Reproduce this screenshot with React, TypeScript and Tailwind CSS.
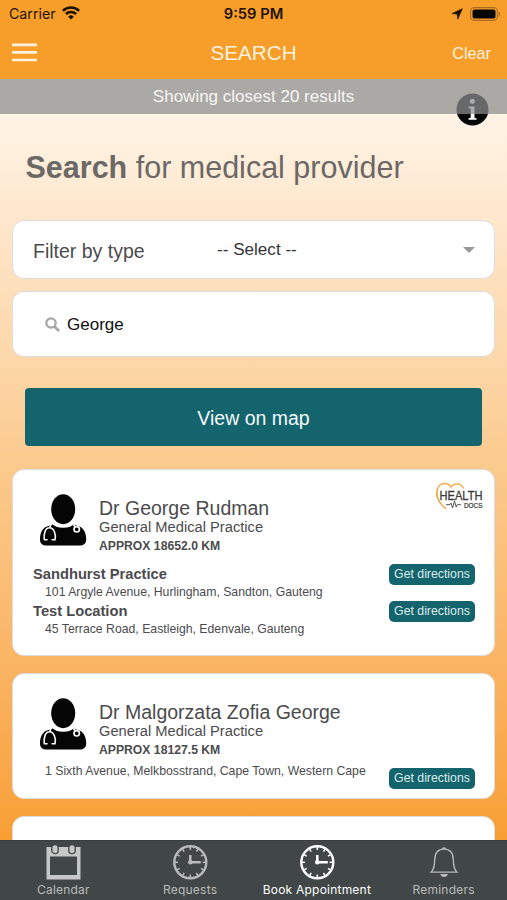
import type { ReactNode } from 'react';

type Location = { name?: string; address: string };

type Provider = {
  name: string;
  practice: string;
  distance: string;
  locations: Location[];
  healthDocs?: boolean;
};

const providers: Provider[] = [
  {
    name: 'Dr George Rudman',
    practice: 'General Medical Practice',
    distance: 'APPROX 18652.0 KM',
    healthDocs: true,
    locations: [
      { name: 'Sandhurst Practice', address: '101 Argyle Avenue, Hurlingham, Sandton, Gauteng' },
      { name: 'Test Location', address: '45 Terrace Road, Eastleigh, Edenvale, Gauteng' },
    ],
  },
  {
    name: 'Dr Malgorzata Zofia George',
    practice: 'General Medical Practice',
    distance: 'APPROX 18127.5 KM',
    locations: [{ address: '1 Sixth Avenue, Melkbosstrand, Cape Town, Western Cape' }],
  },
];

function WifiIcon() {
  return (
    <svg width="18" height="14" viewBox="0 0 18 14" fill="none" stroke="#1c1206" strokeWidth="2.5">
      <path d="M.9 4.9a11.6 11.6 0 0 1 16.2 0" />
      <path d="M3.9 8a7.3 7.3 0 0 1 10.2 0" />
      <path d="M9 13.6 6.2 10.7a4 4 0 0 1 5.6 0Z" fill="#1c1206" stroke="none" />
    </svg>
  );
}

function DoctorIcon() {
  return (
    <svg width="48" height="54" viewBox="0 0 48 54">
      <path
        d="M13 31.500h22c2 1.300 4 1.500 6 2.300 4 1.800 6.200 6.700 6.200 12.700 0 4-2.700 6-6.700 6H7.500c-4 0-6.500-2-6.500-6 0-6 2.200-10.900 6.200-12.700 2-.8 4-1 5.800-2.300Z"
        fill="#050505"
      />
      {/* collar */}
      <path d="M13.500 30c4 5.200 17.400 5.200 21.400 0Z" fill="#fff" stroke="#fff" strokeWidth="1.500" />
      <ellipse cx="24.200" cy="16.200" rx="12" ry="15" fill="#050505" />
      <path
        d="M12.200 31 10.800 34.500M8 46.700H5.300C4.600 41 6 34.800 10.600 34.800S17.200 42 16 46.700H13.200"
        fill="none"
        stroke="#fff"
        strokeWidth="1.600"
        strokeLinecap="round"
        strokeLinejoin="round"
      />
      <path d="m34.500 31.500 2 3" stroke="#fff" strokeWidth="1.600" />
      <circle cx="37.700" cy="36.300" r="2.700" fill="#050505" stroke="#fff" strokeWidth="1.700" />
    </svg>
  );
}

function HealthDocsLogo() {
  return (
    <svg width="52" height="30" viewBox="0 0 52 30" fill="none">
      <path d="M30.500 6.500C28.500.8 20.500.8 18 5.200 15.500.2 7.500.2 5 5.800 2 13 5.500 21 13 26.800" stroke="#f3ab50" strokeWidth="1.400" />
      <path d="M4.500 6.500C1.800 14 6 22 13.500 27" stroke="#f3a33c" strokeWidth="1" />
      <path d="M13 22.700h4l1-1.700 1.500 5 2-7 1.700 6 1-2.300H28" stroke="#444" strokeWidth=".9" />
      <text x="6.500" y="17.900" fill="#3a3a3a" stroke="#3a3a3a" strokeWidth=".3" fontSize="12" textLength="43" lengthAdjust="spacingAndGlyphs">
        HEALTH
      </text>
      <text x="31" y="25.500" fill="#333" stroke="#333" strokeWidth=".2" fontSize="6.800" textLength="18.500" lengthAdjust="spacingAndGlyphs">
        DOCS
      </text>
    </svg>
  );
}

function CalendarIcon() {
  return (
    <svg width="36" height="36" viewBox="0 0 36 36">
      <path d="M1.500 3h34v32.500h-34Z" fill="#c6c7c7" />
      <path d="M5 12.500h27v18.500H5Z" fill="#414747" />
      <rect x="6.800" y=".6" width="6.400" height="9" rx="3.200" fill="#c6c7c7" stroke="#414747" strokeWidth="1.300" />
      <rect x="23.800" y=".6" width="6.400" height="9" rx="3.200" fill="#c6c7c7" stroke="#414747" strokeWidth="1.300" />
    </svg>
  );
}

function ClockIcon() {
  const ticks = [0, 30, 60, 90, 120, 150, 180, 210, 240, 270, 300, 330];
  return (
    <svg width="36" height="36" viewBox="0 0 36 36" fill="none" stroke="currentColor">
      <circle cx="18.300" cy="18.300" r="16" strokeWidth="2.400" />
      {ticks.map((deg) => (
        <path key={deg} d="M18.300 3v3" strokeWidth="1.500" transform={`rotate(${deg} 18.3 18.3)`} />
      ))}
      <path d="M18.300 11v7.300h10.500" strokeWidth="2.500" />
      <circle cx="18.300" cy="18.300" r="2.300" fill="currentColor" stroke="none" />
    </svg>
  );
}

function BellIcon() {
  return (
    <svg width="36" height="36" viewBox="0 0 36 36" fill="none" stroke="#b9bbbb" strokeWidth="1.300">
      <path d="M16.200 5.300a2 2 0 0 1 3.800 0M5 28.200c3.200-3 3.500-6.500 3.700-12.500C8.900 9 12.300 5.200 18 5.200s9.100 3.800 9.300 10.500c.2 6 .5 9.500 3.700 12.500Z" />
      <path d="M14.300 30h7.500c-.3 2-1.600 3-3.700 3s-3.400-1-3.800-3Z" fill="#b9bbbb" stroke="none" />
    </svg>
  );
}

function Card({ className, children }: { className: string; children?: ReactNode }) {
  return (
    <div className={`mx-3 shrink-0 rounded-[12px] border border-[#d9dde0] bg-white ${className}`}>
      {children}
    </div>
  );
}

function DirectionsButton() {
  return (
    <button className="h-[21px] w-[86px] shrink-0 rounded-[5px] bg-[#14646d] text-[12.3px] leading-[21px] whitespace-nowrap text-[#dcebec]">
      Get directions
    </button>
  );
}

function ProviderCard({ provider }: { provider: Provider }) {
  const named = Boolean(provider.locations[0].name);
  return (
    <Card className={named ? 'mt-[23px] h-[187px]' : 'mt-[17px] h-[126px]'}>
      <div className="relative flex pt-[23px] pl-[26px]">
        <DoctorIcon />
        <div className="ml-3 pt-[4px] whitespace-nowrap text-[#4b4b4d]">
          <h2 className="text-[19.5px] leading-[22px]">{provider.name}</h2>
          <p className="text-[14.7px] leading-[17px]">{provider.practice}</p>
          <p className="mt-[2px] text-[12.2px] leading-[17px] font-bold">{provider.distance}</p>
        </div>
        {provider.healthDocs && (
          <div className="absolute top-[12px] right-[9px]">
            <HealthDocsLogo />
          </div>
        )}
      </div>
      <div className={named ? 'mt-[6px]' : 'mt-[4px]'}>
        {provider.locations.map((loc) => (
          <div key={loc.address} className="flex h-[36.5px] justify-between pr-[19px] pl-5">
            <div className={`whitespace-nowrap text-[#4b4b4d] ${named ? 'pt-[4px]' : ''}`}>
              {loc.name && <h3 className="text-[14.7px] leading-[19px] font-bold">{loc.name}</h3>}
              <p className="pl-3 text-[12.25px] leading-[17px]">{loc.address}</p>
            </div>
            <div className={named ? '' : 'pt-[2px]'}>
              <DirectionsButton />
            </div>
          </div>
        ))}
      </div>
    </Card>
  );
}

const tabs = [
  { label: 'Calendar', icon: <CalendarIcon />, active: false },
  { label: 'Requests', icon: <ClockIcon />, active: false },
  { label: 'Book Appointment', icon: <ClockIcon />, active: true },
  { label: 'Reminders', icon: <BellIcon />, active: false },
];

export default function App() {
  return (
    <div className="flex h-[900px] w-[507px] flex-col overflow-hidden bg-[#f79d2a] font-['Liberation_Sans',Arial,sans-serif]">
      <header className="h-[79px] shrink-0 text-[#fff3df]">
        <div className="grid h-[27px] grid-cols-3 items-center px-[7px] font-['Inter',sans-serif] text-[14.2px] text-[#1c1206]">
          <div className="flex items-center gap-[6px] pl-[2px]">
            <span>Carrier</span>
            <WifiIcon />
          </div>
          <span className="pt-[2px] text-center text-[14.7px] font-semibold">9:59 PM</span>
          <div className="flex items-center justify-end gap-[7px]">
            <svg width="12" height="12" viewBox="0 0 12 12" fill="#1c1206">
              <path d="M11.300.7 6.800 11.200 6.100 6.100.900 5.600Z" stroke="#1c1206" strokeWidth=".6" strokeLinejoin="round" />
            </svg>
            <svg width="30" height="14" viewBox="0 0 30 14">
              <rect x=".6" y=".6" width="26.800" height="12.800" rx="3.800" fill="none" stroke="#a96e22" strokeWidth="1.100" />
              <rect x="2.500" y="2.500" width="23" height="9" rx="2" fill="#080602" />
              <path d="M28.700 4.700c2 .7 2 4 0 4.700Z" fill="#a96e22" />
            </svg>
          </div>
        </div>
        <div className="grid h-[52px] grid-cols-3 items-center px-4">
          <svg className="-mt-px -ml-1" width="25" height="19" viewBox="0 0 25 19" stroke="#fff3df" strokeWidth="2.700">
            <path d="M0 1.900h25M0 9.400h25M0 17h25" />
          </svg>
          <h1 className="text-center text-[20.7px]">SEARCH</h1>
          <span className="text-right text-[16.2px]">Clear</span>
        </div>
      </header>

      <main className="relative flex min-h-0 flex-1 flex-col overflow-hidden bg-linear-to-b from-[#fff3e5] from-5% via-[#fbcb8f] via-50% to-[#f89f33] to-100%">
        <div className="absolute top-[14px] right-[18px]">
          <svg width="33" height="33" viewBox="0 0 33 33">
            <circle cx="16.500" cy="16.500" r="16" fill="#050505" />
            <circle cx="16.300" cy="8.300" r="2.500" fill="#fff" />
            <path d="M12.500 13.500h6v11.300l2 .5v1.500h-8v-1.500l2.200-.5v-9.300l-2.200-.5Z" fill="#fff" />
          </svg>
        </div>
        {/* translucent banner, dims the info button under it */}
        <div className="z-10 h-[35px] shrink-0 bg-[#8c8d8e]/73 text-center text-[17px] leading-[36px] text-[#f6f6f4]">
          Showing closest 20 results
        </div>
        <h2 className="mt-[33px] h-[40px] shrink-0 pl-[25.5px] text-[30.5px] leading-[40px] whitespace-nowrap text-[#6c6866]">
          <b>Search</b> for medical provider
        </h2>
        <Card className="mt-[33px] flex h-[59px] items-center pr-[19px] pl-5">
          <span className="w-[184px] pt-[4px] text-[19.5px] text-[#4b4b4d]">Filter by type</span>
          <span className="flex-1 text-[17.1px] text-[#343436]">-- Select --</span>
          <svg width="12" height="6" viewBox="0 0 12 6" fill="#98989a">
            <path d="M0 0h12L6 6Z" />
          </svg>
        </Card>
        <Card className="mt-3 flex h-[66px] items-center pl-[32px]">
          <svg width="15" height="15" viewBox="0 0 15 15" fill="none" stroke="#a5a5a5" strokeWidth="2.200">
            <circle cx="6" cy="6" r="4.700" />
            <path d="m9.500 9.500 4.500 4.500" strokeWidth="2.700" />
          </svg>
          <span className="pt-px pl-[7px] text-[17px] text-[#111]">George</span>
        </Card>
        <button className="mx-[25px] mt-[31px] h-[58px] shrink-0 rounded-[4px] bg-[#14646d] pt-[3px] text-[19.5px] text-[#f3f8f8]">
          View on map
        </button>
        {providers.map((p) => (
          <ProviderCard key={p.name} provider={p} />
        ))}
        <Card className="mt-[17px] h-[126px]" />
      </main>

      <nav className="grid h-[60px] shrink-0 grid-cols-4 border-t border-[#393e3e] bg-[#414747] font-['Inter',sans-serif]">
        {tabs.map((tab) => (
          <div
            key={tab.label}
            className={`flex flex-col items-center pt-[3px] ${tab.active ? 'text-white' : 'text-[#b9bbbb]'}`}
          >
            {tab.icon}
            <span className="mt-[2px] text-[12px] leading-[16px] tracking-[0.22px] whitespace-nowrap">{tab.label}</span>
          </div>
        ))}
      </nav>
    </div>
  );
}
